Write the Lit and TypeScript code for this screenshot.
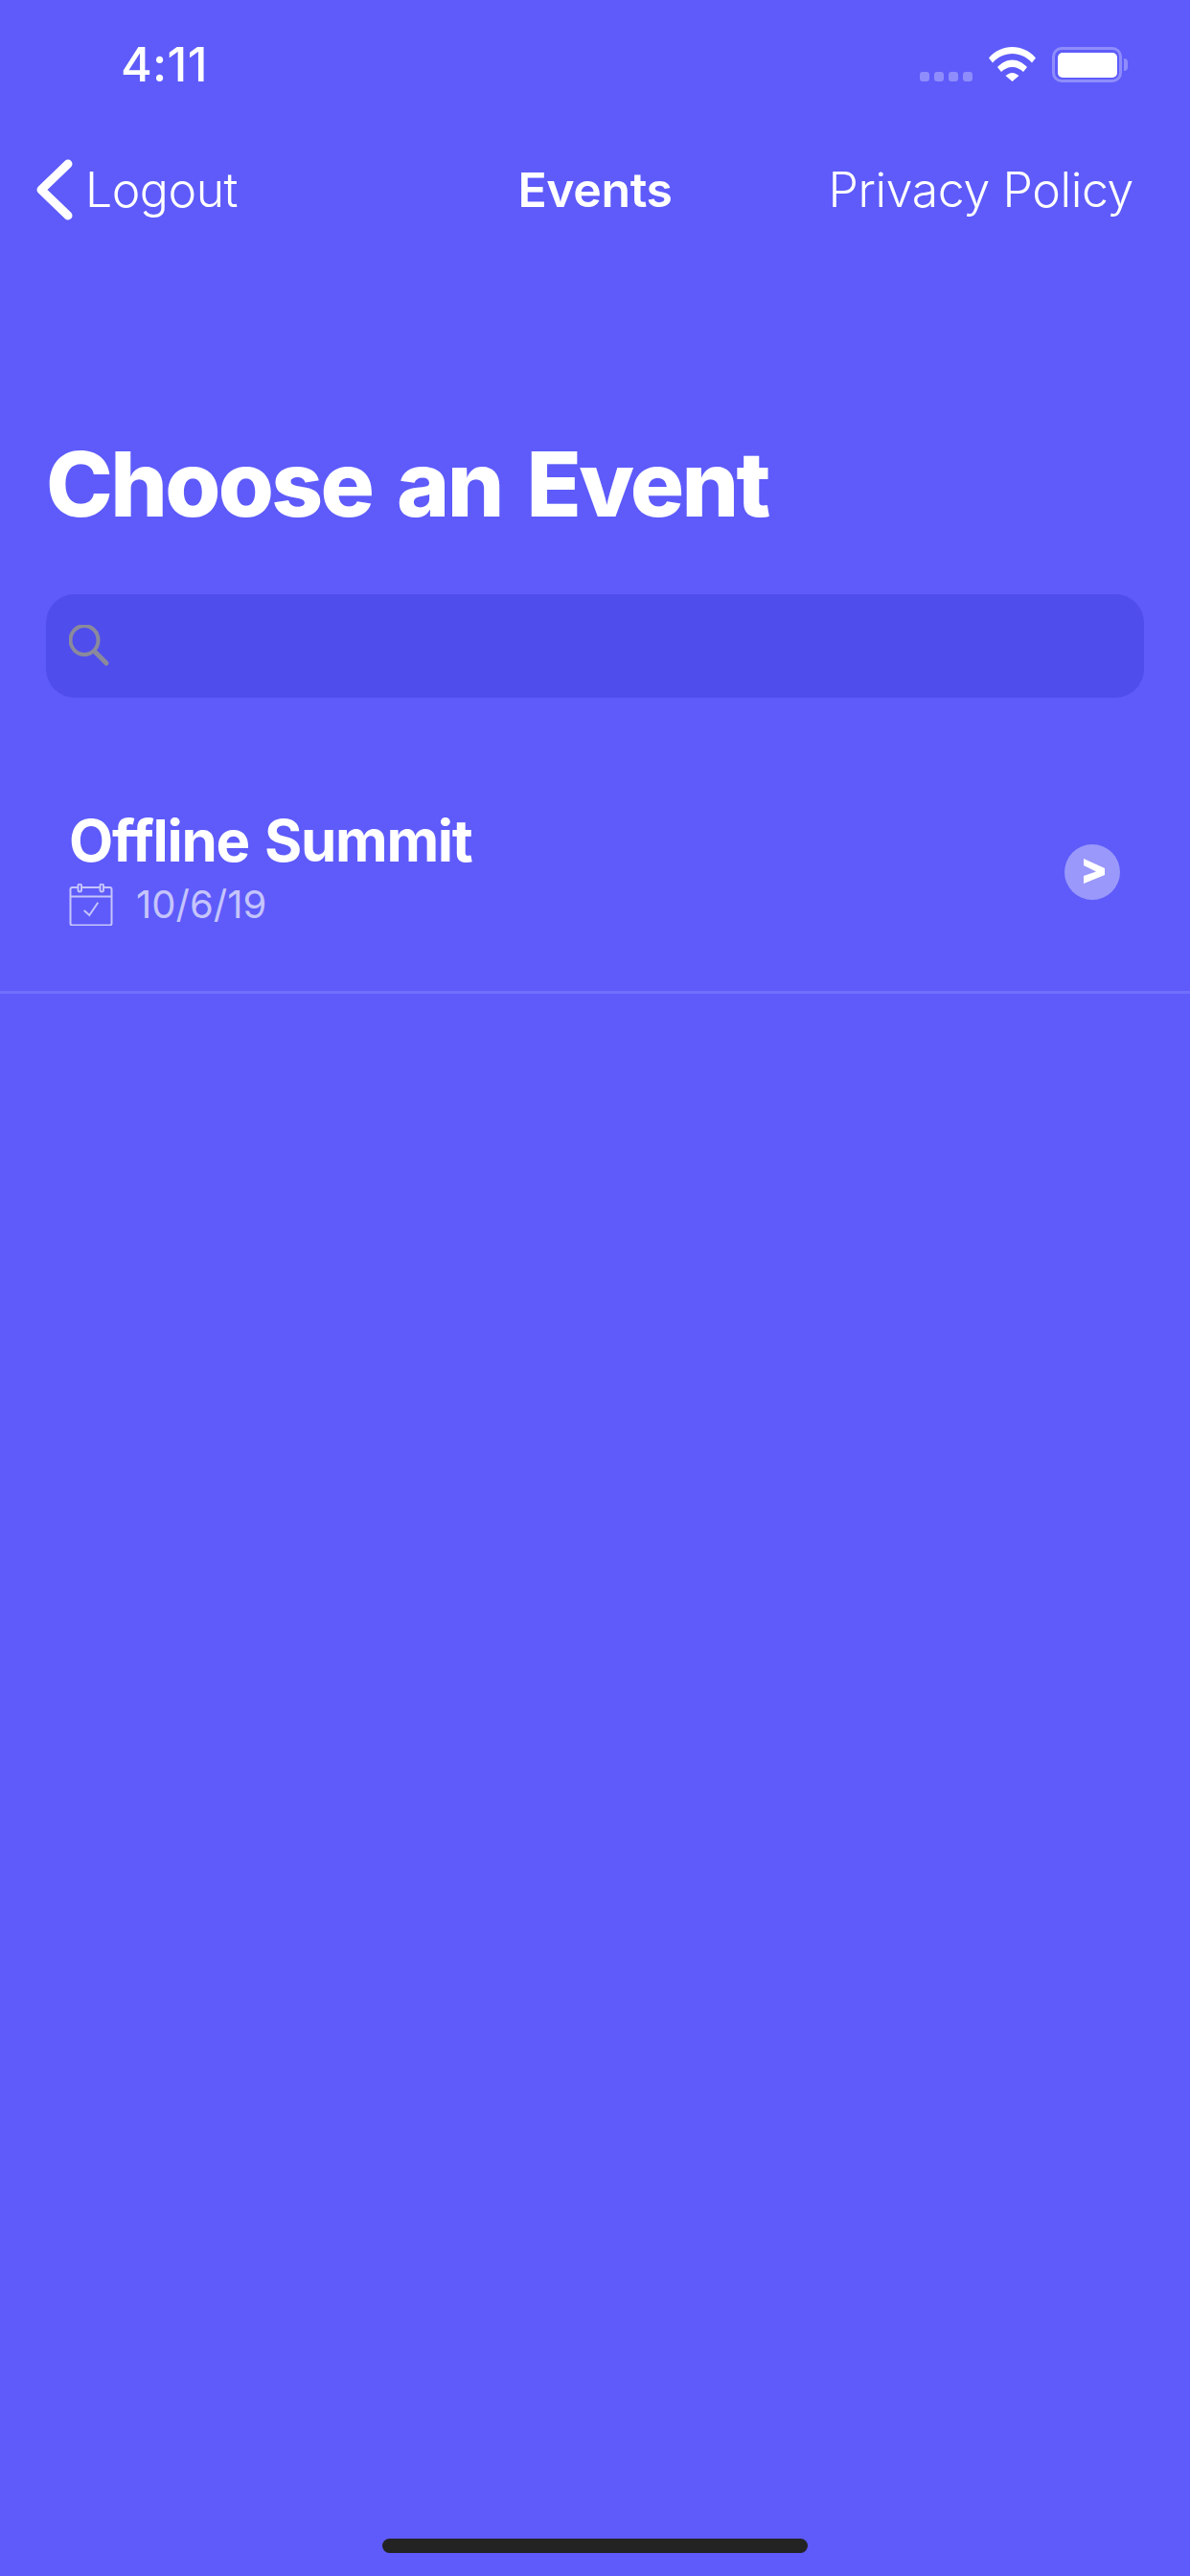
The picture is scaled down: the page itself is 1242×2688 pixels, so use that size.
import { LitElement, html, css } from "lit";
import { customElement } from "lit/decorators.js";

@customElement("app-root")
export class AppRoot extends LitElement {
  static styles = css`
    :host {
      display: block;
      width: 1242px;
      height: 2688px;
      background: #5e5bfa;
      color: #fff;
      font-family: "Inter", "Liberation Sans", sans-serif;
    }
    .page { display: flex; flex-direction: column; height: 2688px; }
    .status {
      display: flex;
      align-items: flex-start;
      height: 144px;
      padding: 49px 0 0 126px;
      box-sizing: border-box;
    }
    .time { font-size: 50px; line-height: 37px; font-weight: 500; width: 834px; letter-spacing: 0.3px; }
    .dots { display: flex; gap: 5px; margin-top: 26px; }
    .dot { width: 10px; height: 10px; border-radius: 3px; background: #8f8dfb; }
    .wifi { margin-left: 17px; display: block; }
    .battery { display: flex; align-items: center; margin-left: 17px; }
    .shell {
      width: 73px;
      height: 37px;
      box-sizing: border-box;
      border: 3.5px solid #8f8dfb;
      border-radius: 10px;
      padding: 2.5px;
    }
    .charge { height: 100%; background: #fff; border-radius: 5px; }
    .nub { width: 4px; height: 13px; margin-left: 2px; background: #8f8dfb; border-radius: 0 7px 7px 0; }
    .nav {
      display: grid;
      grid-template-columns: minmax(0, 1fr) auto minmax(0, 1fr);
      align-items: center;
      height: 108px;
      padding: 0 38px;
      font-size: 50px;
      font-weight: 300;
    }
    .left { display: flex; align-items: center; gap: 13px; letter-spacing: -0.5px; }
    .back { display: block; }
    .center { font-weight: 600; font-size: 50px; letter-spacing: -0.4px; }
    .right { justify-self: end; margin-right: 21px; letter-spacing: -0.4px; }
    .title {
      margin: 195px 0 0 48px;
      font-size: 94px;
      line-height: 116px;
      font-weight: 800;
      letter-spacing: -2.7px;
      word-spacing: 8px;
    }
    .search {
      display: flex;
      align-items: center;
      margin: 57px 48px 0;
      height: 108px;
      padding: 0 24px;
      box-sizing: border-box;
      background: #504ded;
      border-radius: 30px;
    }
    .row {
      display: flex;
      align-items: flex-start;
      justify-content: space-between;
      margin-top: 87px;
      padding: 22px 73px 0 72px;
      height: 222px;
      box-sizing: border-box;
      border-bottom: 3px solid #716ffb;
    }
    .row-main { display: flex; flex-direction: column; }
    .row-title { font-size: 60px; line-height: 80px; font-weight: 700; letter-spacing: -1.3px; word-spacing: 3px; }
    .date {
      display: flex;
      align-items: center;
      gap: 24px;
      margin-top: 5px;
      font-size: 40px;
      line-height: 44px;
      color: #c5c4fc;
      font-weight: 400;
    }
    .go {
      display: flex;
      align-items: center;
      justify-content: center;
      width: 58px;
      height: 58px;
      padding: 0 0 3px 4px;
      box-sizing: border-box;
      border-radius: 50%;
      background: #9a98fa;
      margin-top: 44px;
    }
    .spacer { flex: 1; }
    .home {
      align-self: center;
      width: 444px;
      height: 15px;
      margin-bottom: 24px;
      border-radius: 8px;
      background: #232323;
    }
  `;

  render() {
    return html`
      <div class="page">
        <div class="status">
          <div class="time">4:11</div>
          <div class="dots">
            <div class="dot"></div><div class="dot"></div><div class="dot"></div><div class="dot"></div>
          </div>
          <svg class="wifi" width="49" height="36" viewBox="0 0 49 36" fill="#fff">
            <path d="M0 11.5C6.5 4 15 0 24.5 0C34 0 42.5 4 49 11.5L45 16.5C39.5 10.5 32.5 7 24.5 7C16.5 7 9.5 10.5 4 16.5Z"/>
            <path d="M9 21C13 17 18.5 13.5 24.5 13.5C30.5 13.5 36 17 40 21L36 26C33 23 29 21 24.5 21C20 21 16 23 13 26Z"/>
            <path d="M17.5 30C19.5 28.5 22 27 24.5 27C27 27 29.5 28.5 31.5 30L24.5 36Z"/>
          </svg>
          <div class="battery">
            <div class="shell"><div class="charge"></div></div>
            <div class="nub"></div>
          </div>
        </div>
        <div class="nav">
          <div class="left">
            <svg class="back" width="38" height="64" viewBox="0 0 38 64" fill="none" stroke="#fff" stroke-width="9" stroke-linecap="round" stroke-linejoin="round">
              <path d="M33 5L5 32L33 59"/>
            </svg>
            <span>Logout</span>
          </div>
          <div class="center">Events</div>
          <div class="right">Privacy Policy</div>
        </div>
        <div class="title">Choose an Event</div>
        <div class="search">
          <svg width="44" height="44" viewBox="0 0 44 44" fill="none" stroke="#8a8a9c" stroke-width="4" stroke-linecap="round">
            <ellipse cx="16" cy="16" rx="14.5" ry="15"/>
            <path d="M27 28L39 40" stroke-width="5"/>
          </svg>
        </div>
        <div class="row">
          <div class="row-main">
            <div class="row-title">Offline Summit</div>
            <div class="date">
              <svg width="46" height="44" viewBox="0 0 46 44" fill="none" stroke="#c5c4fc" stroke-width="2">
                <rect x="1.5" y="4" width="43" height="39.5" rx="2"/>
                <path d="M1.5 13.5H44.5"/>
                <rect x="9.5" y="0.5" width="3.5" height="8" rx="1.75" fill="#5e5bfa"/>
                <rect x="32.5" y="0.5" width="3.5" height="8" rx="1.75" fill="#5e5bfa"/>
                <path d="M15.7 28L21.3 33L30.3 19.7"/>
              </svg>
              <span>10/6/19</span>
            </div>
          </div>
          <div class="go">
            <svg width="22" height="26" viewBox="0 0 22 26" fill="#fff">
              <path d="M0 0L22 10V17L0 26V18L13 13.5L0 7Z"/>
            </svg>
          </div>
        </div>
        <div class="spacer"></div>
        <div class="home"></div>
      </div>
    `;
  }
}
